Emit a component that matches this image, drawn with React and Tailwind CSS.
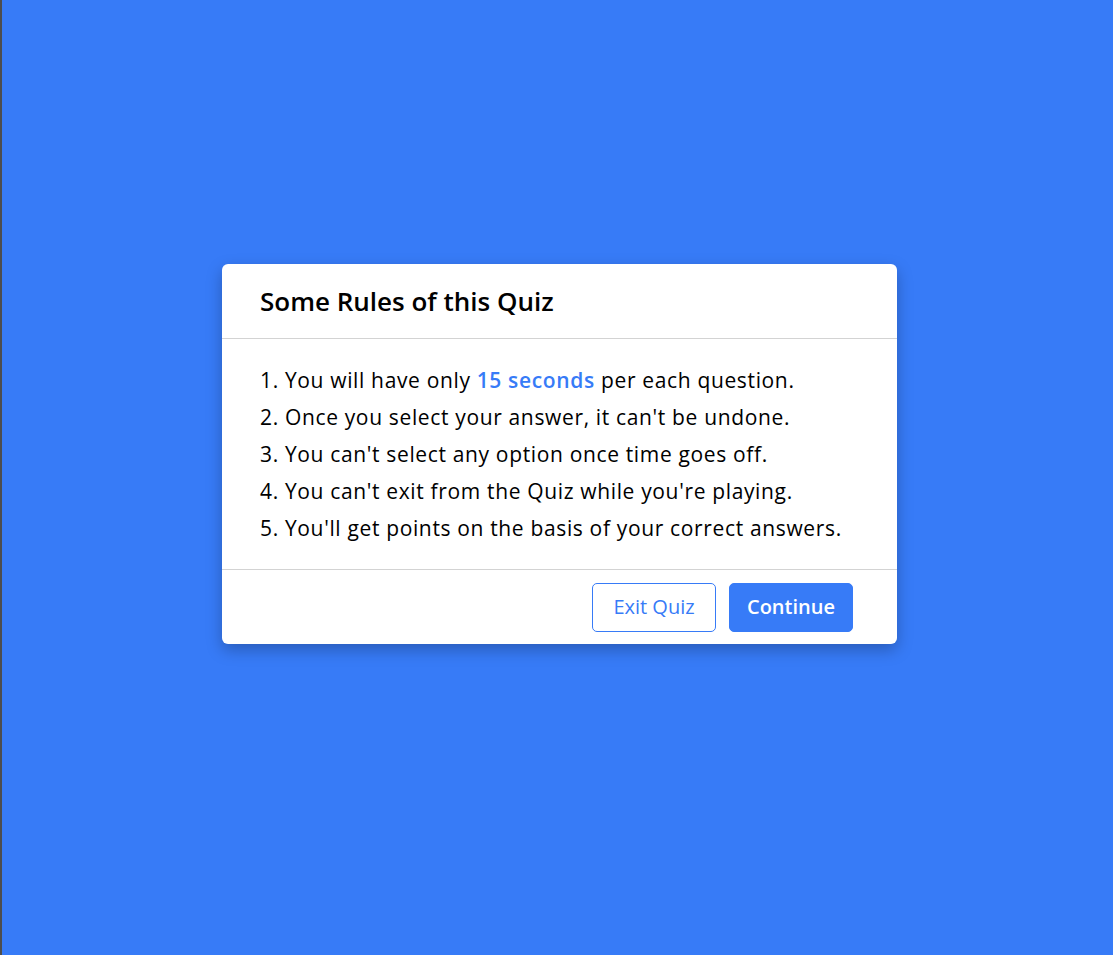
export default function App() {
  const rules = [
    <>1. You will have only <span className="font-semibold text-[#377bf7]">15 seconds</span> per each question.</>,
    <>2. Once you select your answer, it can't be undone.</>,
    <>3. You can't select any option once time goes off.</>,
    <>4. You can't exit from the Quiz while you're playing.</>,
    <>5. You'll get points on the basis of your correct answers.</>,
  ];
  return (
    <div className="flex min-h-[955px] w-full bg-[#377bf7] font-['Open_Sans',sans-serif]">
      <div className="w-[2px] shrink-0 bg-[#4d4d4d]" />
      <div className="ml-[220px] mt-[264px] h-fit w-[675px] rounded-[6px] bg-white shadow-[0_6px_16px_rgba(0,0,0,0.25)]">
        <div className="flex h-[75px] items-center border-b border-[#d3d3d3] px-[38px] text-[26px] font-semibold text-black">
          Some Rules of this Quiz
        </div>
        <ul className="flex flex-col gap-[6px] border-b border-[#d3d3d3] px-[38px] pb-[25px] pt-[26px] text-[21px] leading-[31px] tracking-[0.65px] text-black">
          {rules.map((r, i) => (
            <li key={i}>{r}</li>
          ))}
        </ul>
        <div className="flex h-[74px] items-center justify-end gap-[13px] px-[44px]">
          <button className="h-[49px] w-[124px] rounded-[5px] border border-[#377bf7] bg-white text-[20px] font-medium text-[#377bf7]">
            Exit Quiz
          </button>
          <button className="h-[49px] w-[124px] rounded-[5px] border border-[#377bf7] bg-[#377bf7] text-[20px] font-semibold text-white">
            Continue
          </button>
        </div>
      </div>
    </div>
  );
}
